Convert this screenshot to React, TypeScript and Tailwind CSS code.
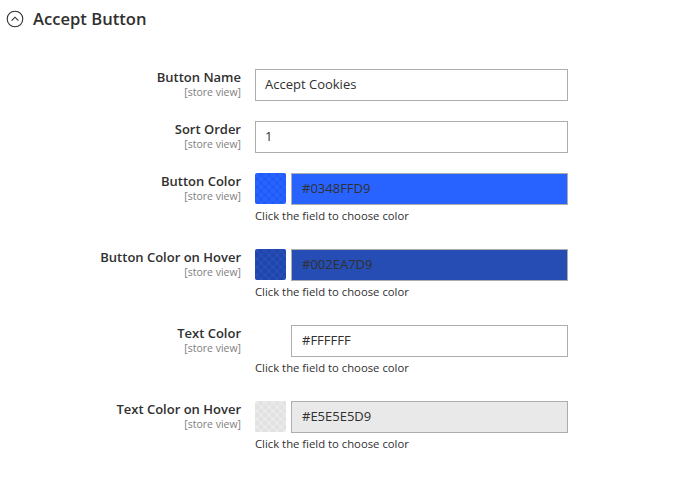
import React from "react";

const font = { fontFamily: '"Open Sans", "Noto Sans", sans-serif' };

function Label({ title }: { title: string }) {
  return (
    <div className="w-[241px] shrink-0 text-right -mt-[1px]">
      <div className="text-[13px] leading-[18px] font-semibold text-[#303030]">{title}</div>
      <div className="text-[10.5px] leading-[13px] text-[#808080]">[store view]</div>
    </div>
  );
}

function TextRow({ title, value }: { title: string; value: string }) {
  return (
    <div className="flex items-start h-[52px]">
      <Label title={title} />
      <div className="ml-[14px] w-[313px] h-[32px] border border-[#adadad] bg-white flex items-center px-[9px] text-[13px] text-[#303030]">
        {value}
      </div>
    </div>
  );
}

function ColorRow({
  title,
  value,
  swatch,
  fieldBg,
  showSwatch = true,
}: {
  title: string;
  value: string;
  swatch: string;
  fieldBg: string;
  showSwatch?: boolean;
}) {
  return (
    <div className="flex items-start h-[76px]">
      <Label title={title} />
      <div className="ml-[14px] w-[313px]">
        <div className="flex items-start">
          {showSwatch ? (
            <div className="w-[31px] h-[31px] rounded-[2px] overflow-hidden bg-[repeating-conic-gradient(#cfcfcf_0%_25%,#ffffff_0%_50%)] bg-[length:8px_8px]">
              <div className={`w-full h-full ${swatch}`} />
            </div>
          ) : (
            <div className="w-[31px] h-[31px] rounded-[2px] bg-white" />
          )}
          <div
            className={`ml-[5px] flex-1 h-[32px] border border-[#adadad] flex items-center px-[10px] text-[13px] text-[#303030] ${fieldBg}`}
          >
            {value}
          </div>
        </div>
        <div className="mt-[1px] text-[11.3px] leading-[20px] text-[#303030]">
          Click the field to choose color
        </div>
      </div>
    </div>
  );
}

export default function App() {
  return (
    <div className="w-[685px] h-[479px] bg-white overflow-hidden" style={font}>
      <div className="flex items-center pl-[6px] pt-[10px] h-[28px]">
        <svg width="18" height="18" viewBox="0 0 18 18" className="shrink-0">
          <circle cx="9" cy="9" r="7.8" fill="none" stroke="#303030" strokeWidth="1.1" />
          <path d="M5.6 10.6 L9 7.2 L12.4 10.6" fill="none" stroke="#303030" strokeWidth="1.1" />
        </svg>
        <span className="ml-[9px] text-[16.6px] font-semibold text-[#303030] leading-[22px]">
          Accept Button
        </span>
      </div>
      <div className="mt-[41px]">
        <TextRow title="Button Name" value="Accept Cookies" />
        <TextRow title="Sort Order" value="1" />
        <ColorRow
          title="Button Color"
          value="#0348FFD9"
          swatch="bg-[#0348FFD9]"
          fieldBg="bg-[#2963FF]"
        />
        <ColorRow
          title="Button Color on Hover"
          value="#002EA7D9"
          swatch="bg-[#002EA7D9]"
          fieldBg="bg-[#264DB4]"
        />
        <ColorRow
          title="Text Color"
          value="#FFFFFF"
          swatch="bg-white"
          fieldBg="bg-white"
          showSwatch={false}
        />
        <ColorRow
          title="Text Color on Hover"
          value="#E5E5E5D9"
          swatch="bg-[#E5E5E5D9]"
          fieldBg="bg-[#E9E9E9]"
        />
      </div>
    </div>
  );
}
